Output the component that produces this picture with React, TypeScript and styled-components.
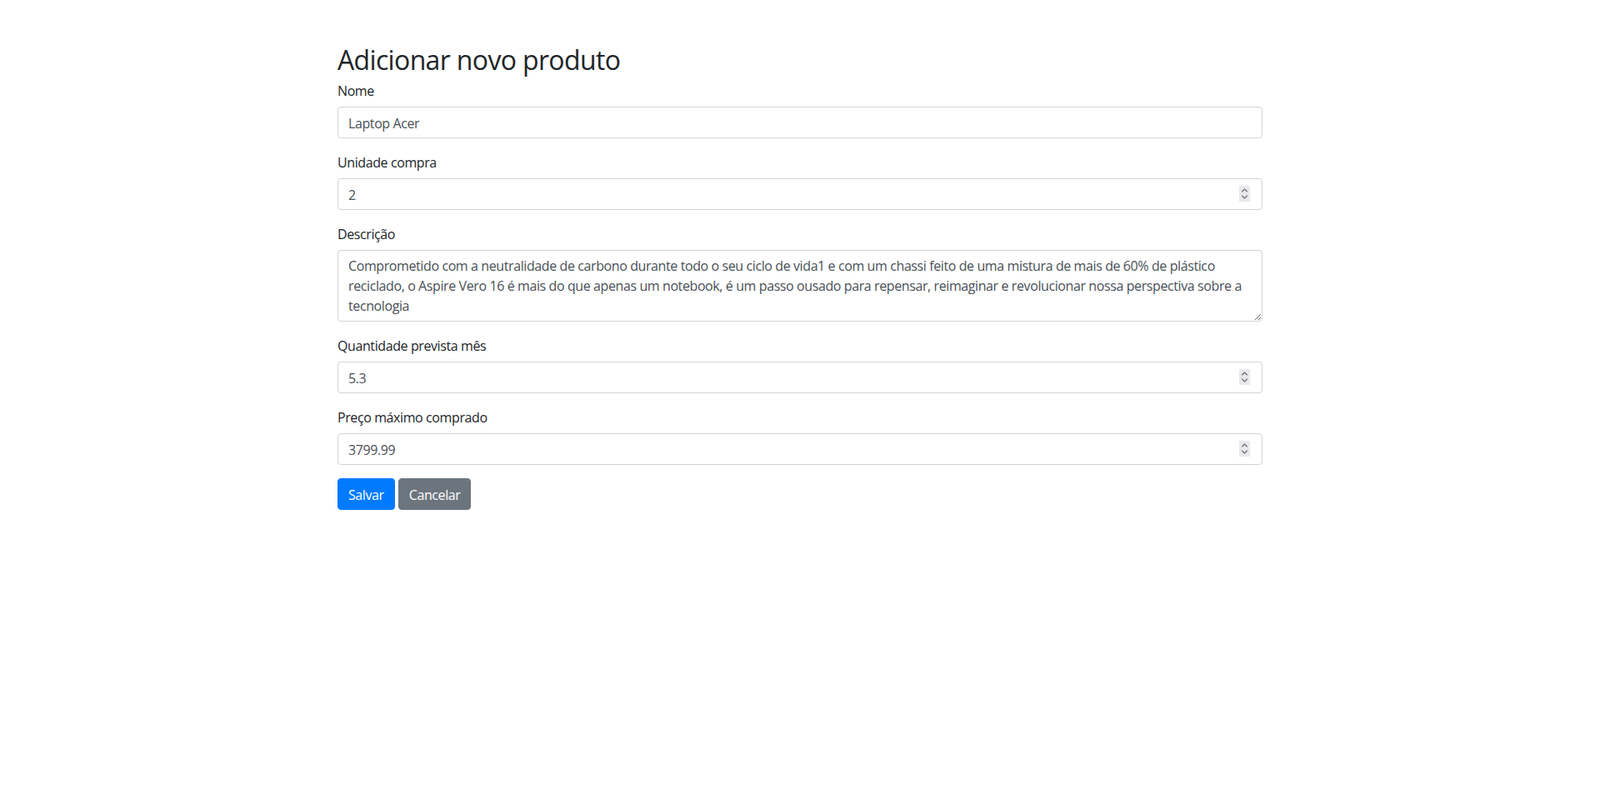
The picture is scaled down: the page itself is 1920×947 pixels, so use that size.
import React from "react";
import styled, { createGlobalStyle } from "styled-components";

const FONT = `"Open Sans", "Noto Sans", "Liberation Sans", sans-serif`;

const GlobalStyle = createGlobalStyle`
  *, *::before, *::after { box-sizing: border-box; }
  html, body { margin: 0; padding: 0; background: #fff; }
  body {
    font-family: ${FONT};
    font-size: 16px;
    line-height: 1.5;
    color: #212529;
  }
`;

const Container = styled.div`
  max-width: 1140px;
  margin: 0 auto;
  padding: 52.6px 15px 0;
`;

const Title = styled.h2`
  margin: 0 0 5px;
  font-size: 32px;
  font-weight: 500;
  line-height: 1.2;
  letter-spacing: -0.65px;
`;

const Form = styled.form`
  display: flex;
  flex-direction: column;
`;

const FormGroup = styled.div`
  margin-bottom: 16px;
`;

const Label = styled.label`
  display: block;
  margin-bottom: 7px;
  padding-top: 1px;
  font-size: 16px;
  line-height: 24px;
  letter-spacing: -0.4px;
`;

const FieldWrap = styled.div`
  position: relative;
`;

const Input = styled.input`
  display: block;
  width: 100%;
  height: 38px;
  padding: 7px 12px 5px;
  font-family: ${FONT};
  font-size: 16px;
  line-height: 1.5;
  letter-spacing: -0.4px;
  color: #495057;
  background: #fff;
  border: 1px solid #ced4da;
  border-radius: 4px;
  outline: none;
`;

const TextArea = styled.textarea`
  display: block;
  width: 100%;
  height: 86px;
  padding: 6px 12px;
  font-family: ${FONT};
  font-size: 16px;
  line-height: 1.5;
  letter-spacing: -0.4px;
  color: #495057;
  background: #fff;
  border: 1px solid #ced4da;
  border-radius: 4px;
  outline: none;
  resize: vertical;
  overflow: hidden;
`;

const Spinner = styled.div`
  position: absolute;
  right: 15px;
  top: 9px;
  width: 13px;
  height: 19px;
  background: #e9e9ed;
  display: flex;
  align-items: center;
  justify-content: center;
  pointer-events: none;
`;

const ButtonRow = styled.div`
  display: flex;
  gap: 4px;
`;

const Button = styled.button<{ $variant: "primary" | "secondary" }>`
  height: 38px;
  padding: 7px 12px 5px;
  font-family: ${FONT};
  font-size: 16px;
  line-height: 1.5;
  letter-spacing: -0.4px;
  color: #fff;
  border-radius: 4px;
  cursor: pointer;
  background: ${(p) => (p.$variant === "primary" ? "#007bff" : "#6c757d")};
  border: 1px solid ${(p) => (p.$variant === "primary" ? "#007bff" : "#6c757d")};
`;

const SpinIcon = () => (
  <svg width="9" height="15" viewBox="0 0 9 15" fill="none" stroke="#6d6d6d" strokeWidth="1.1" strokeLinecap="round" strokeLinejoin="round">
    <path d="M1.5 5 L4.5 2 L7.5 5" />
    <path d="M1.5 10 L4.5 13 L7.5 10" />
  </svg>
);

const NumberField: React.FC<{ id: string; value: string }> = ({ id, value }) => (
  <FieldWrap>
    <Input id={id} type="text" defaultValue={value} />
    <Spinner>
      <SpinIcon />
    </Spinner>
  </FieldWrap>
);

const description =
  "Comprometido com a neutralidade de carbono durante todo o seu ciclo de vida1 e com um chassi feito de uma mistura de mais de 60% de plástico reciclado, o Aspire Vero 16 é mais do que apenas um notebook, é um passo ousado para repensar, reimaginar e revolucionar nossa perspectiva sobre a tecnologia";

export default function App() {
  return (
    <>
      <GlobalStyle />
      <Container>
        <Title>Adicionar novo produto</Title>
        <Form onSubmit={(e) => e.preventDefault()}>
          <FormGroup>
            <Label htmlFor="nome">Nome</Label>
            <Input id="nome" type="text" defaultValue="Laptop Acer" />
          </FormGroup>
          <FormGroup>
            <Label htmlFor="unidade">Unidade compra</Label>
            <NumberField id="unidade" value="2" />
          </FormGroup>
          <FormGroup>
            <Label htmlFor="descricao">Descrição</Label>
            <TextArea id="descricao" rows={3} defaultValue={description} />
          </FormGroup>
          <FormGroup>
            <Label htmlFor="quantidade">Quantidade prevista mês</Label>
            <NumberField id="quantidade" value="5.3" />
          </FormGroup>
          <FormGroup>
            <Label htmlFor="preco">Preço máximo comprado</Label>
            <NumberField id="preco" value="3799.99" />
          </FormGroup>
          <ButtonRow>
            <Button type="submit" $variant="primary">Salvar</Button>
            <Button type="button" $variant="secondary">Cancelar</Button>
          </ButtonRow>
        </Form>
      </Container>
    </>
  );
}
